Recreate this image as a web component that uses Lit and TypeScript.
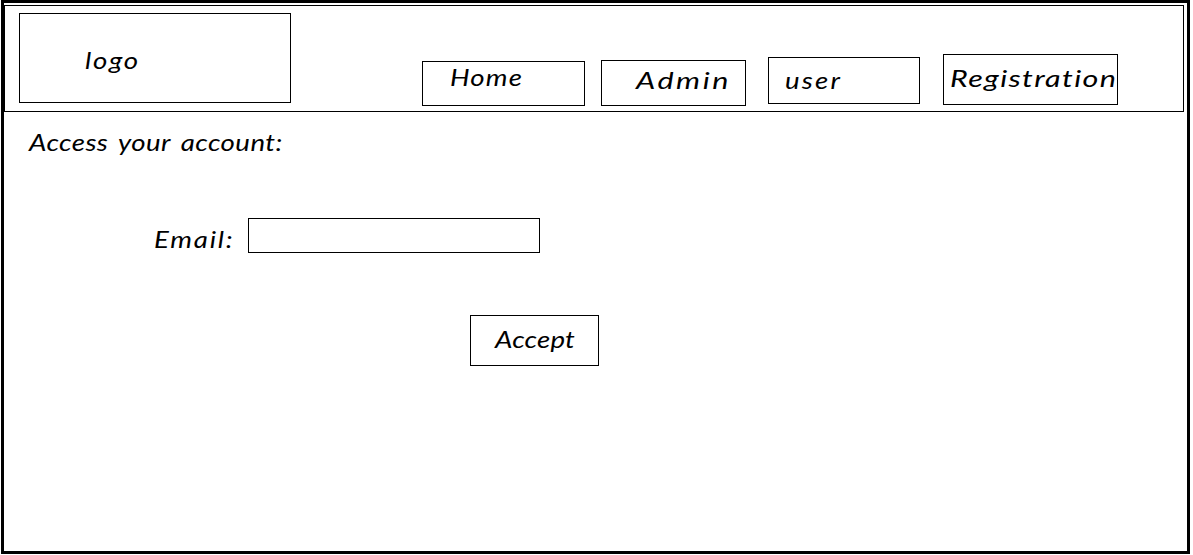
import { LitElement, html, css } from "lit";
import { customElement } from "lit/decorators.js";

@customElement("app-root")
export class AppRoot extends LitElement {
  static styles = css`
    :host { display: block; width: 1193px; height: 555px; background: #fff; overflow: hidden; }
    * { box-sizing: border-box; margin: 0; }
    .page {
      margin-left: 1px; width: 1189px; height: 554px; border: 3px solid #000; padding-top: 2px;
      font: italic 400 24px/29px Lato, sans-serif; color: #000; white-space: nowrap;
    }
    .header { display: flex; align-items: flex-start; width: 1180px; height: 107px; border: 1px solid #000; }
    .box { border: 1px solid #000; color: #000; text-decoration: none; flex: none; }
    .ink { display: inline-block; vertical-align: top; transform: scaleX(1.15); transform-origin: 0 0; }
    .wide { transform: scaleX(1.27); }
    .logo { width: 272px; height: 90px; margin: 7px 0 0 14px; padding: 31px 0 0 65px; letter-spacing: 1.5px; }
    .nav { display: flex; align-items: flex-start; margin-left: 131px; }
    .home { width: 163px; height: 45px; margin-top: 55px; padding-left: 27px; letter-spacing: 1px; }
    .admin { width: 145px; height: 46px; margin: 54px 0 0 16px; padding: 4px 0 0 34px; letter-spacing: 2px; }
    .user { width: 152px; height: 47px; margin: 51px 0 0 22px; padding: 7px 0 0 16px; letter-spacing: 1.9px; }
    .registration { width: 175px; height: 51px; margin: 48px 0 0 23px; padding: 8px 0 0 6px; letter-spacing: 1.05px; }
    .title { font: inherit; margin: 15px 0 0 25px; letter-spacing: 0.36px; word-spacing: 3px; }
    .field { display: flex; align-items: flex-start; margin: 62px 0 0 149px; }
    .label { width: 95px; padding: 6px 0 0 1px; letter-spacing: 1.56px; }
    .input { width: 292px; height: 35px; border-radius: 0; outline: 0; background: #fff; font: inherit; padding: 0 8px; }
    .accept { display: block; width: 129px; height: 51px; margin: 62px 0 0 466px; padding: 8px 0 0 24px; letter-spacing: 0.15px; }
  `;

  render() {
    return html`
      <div class="page">
        <header class="header">
          <div class="box logo"><span class="ink">logo</span></div>
          <nav class="nav">
            <a class="box home"><span class="ink">Home</span></a>
            <a class="box admin"><span class="ink wide">Admin</span></a>
            <a class="box user"><span class="ink">user</span></a>
            <a class="box registration"><span class="ink wide">Registration</span></a>
          </nav>
        </header>
        <main>
          <h1 class="title"><span class="ink">Access your account:</span></h1>
          <div class="field">
            <label class="label" for="email"><span class="ink">Email:</span></label>
            <input class="box input" id="email" type="text" />
          </div>
          <a class="box accept"><span class="ink">Accept</span></a>
        </main>
      </div>
    `;
  }
}
